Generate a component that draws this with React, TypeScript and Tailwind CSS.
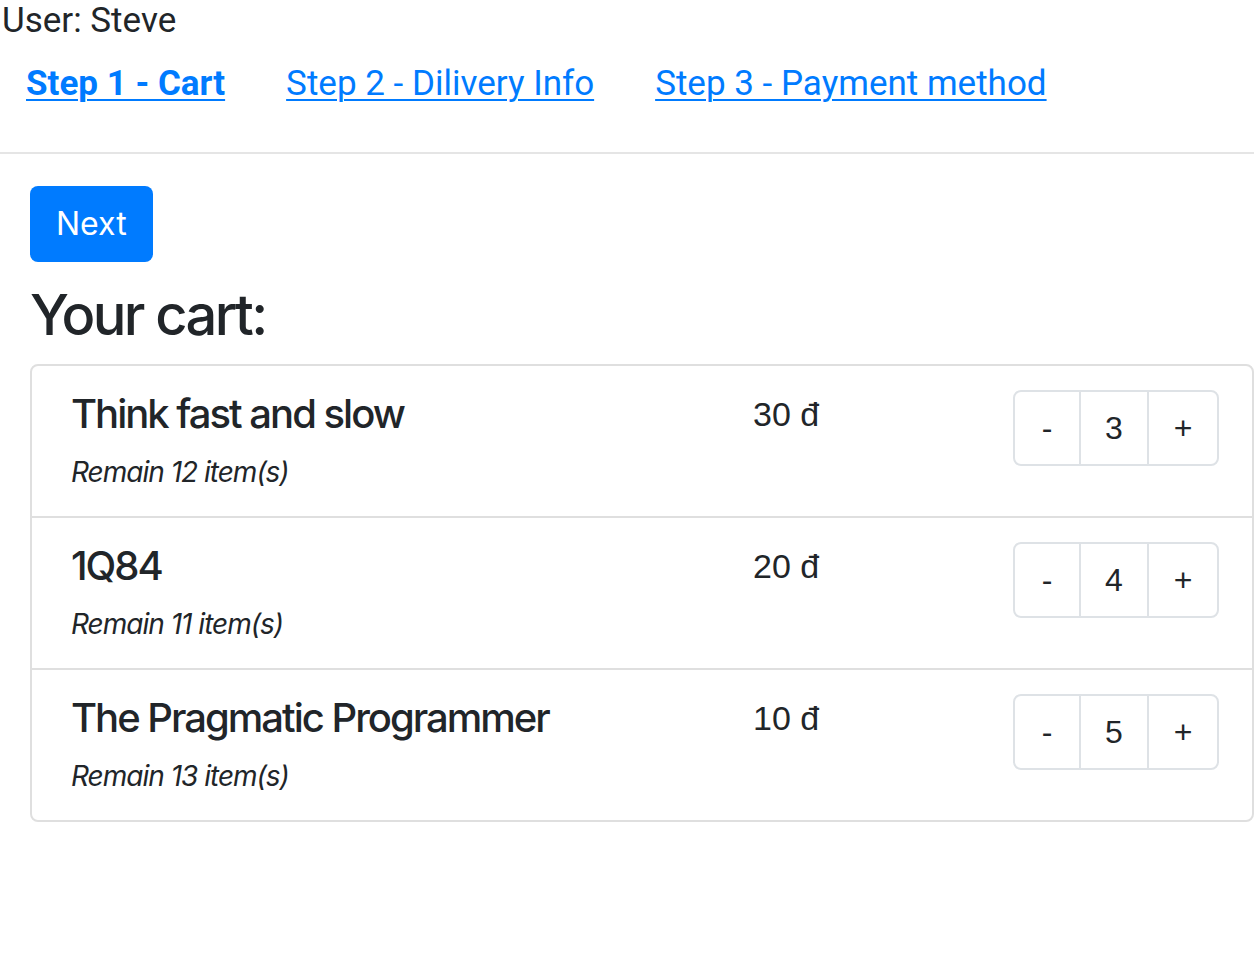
import React, { useState } from 'react';

type CartItem = {
  id: number;
  title: string;
  price: number;
  remain: number;
  qty: number;
};

const initialItems: CartItem[] = [
  { id: 1, title: 'Think fast and slow', price: 30, remain: 12, qty: 3 },
  { id: 2, title: '1Q84', price: 20, remain: 11, qty: 4 },
  { id: 3, title: 'The Pragmatic Programmer', price: 10, remain: 13, qty: 5 },
];

const steps = ['Step 1 - Cart', 'Step 2 - Dilivery Info', 'Step 3 - Payment method'];

export default function App() {
  const [items, setItems] = useState(initialItems);

  const changeQty = (id: number, delta: number) => {
    setItems((prev) =>
      prev.map((it) => (it.id === id ? { ...it, qty: Math.max(0, it.qty + delta) } : it))
    );
  };

  return (
    <div className="min-h-screen bg-white text-[#212529]">
      {/* Header: user + steps */}
      <div className="font-['Roboto',sans-serif]">
        <div className="pl-[2px] pt-[1px] text-[35px] leading-[40px] text-[#212529]">User: Steve</div>
        <div className="flex gap-[61px] pl-[26px] mt-[23px] text-[35px] leading-[40px]">
          {steps.map((s, i) => (
            <a
              key={s}
              href="#"
              className={`text-[#007bff] underline underline-offset-[4px] decoration-2 ${i === 0 ? 'font-bold' : ''}`}
            >
              {s}
            </a>
          ))}
        </div>
      </div>

      <div className="mt-[48px] h-[2px] bg-[#e5e5e5]" />

      <div className="pl-[30px] pt-[32px] font-['Inter',sans-serif]">
        <button className="h-[76px] px-[26px] rounded-[8px] bg-[#007bff] text-white text-[32px] leading-[48px]">
          Next
        </button>

        <h3 className="mt-[20px] mb-[15px] text-[56px] leading-[67px] font-medium tracking-[-2.6px]">Your cart:</h3>

        {/* Cart list */}
        <div className="border-2 border-[#dfdfdf] rounded-[8px]">
          {items.map((it, idx) => (
            <div
              key={it.id}
              className={`flex items-start pl-[39px] pt-[24px] pb-[24px] ${idx > 0 ? 'border-t-2 border-[#dfdfdf]' : ''}`}
            >
              <div className="w-[682px]">
                <h5 className="text-[40px] leading-[48px] font-medium tracking-[-2px]">{it.title}</h5>
                <p className="mt-[13px] mb-[-1px] text-[28px] leading-[42px] italic tracking-[-1px]">
                  Remain {it.remain} item(s)
                </p>
              </div>
              <div className="w-[260px] font-['Liberation_Sans',Arial,sans-serif] text-[34px] leading-[48px]">
                {it.price} đ
              </div>
              <div className="flex h-[76px] w-[206px] border-2 border-[#dee2e6] rounded-[8px] font-['Liberation_Sans',Arial,sans-serif] text-[32px]">
                <button
                  onClick={() => changeQty(it.id, -1)}
                  className="w-[64px] flex items-center justify-center"
                >
                  -
                </button>
                <div className="w-[70px] flex items-center justify-center border-l-2 border-r-2 border-[#dee2e6]">
                  {it.qty}
                </div>
                <button
                  onClick={() => changeQty(it.id, 1)}
                  className="flex-1 flex items-center justify-center"
                >
                  +
                </button>
              </div>
            </div>
          ))}
        </div>
      </div>
    </div>
  );
}
